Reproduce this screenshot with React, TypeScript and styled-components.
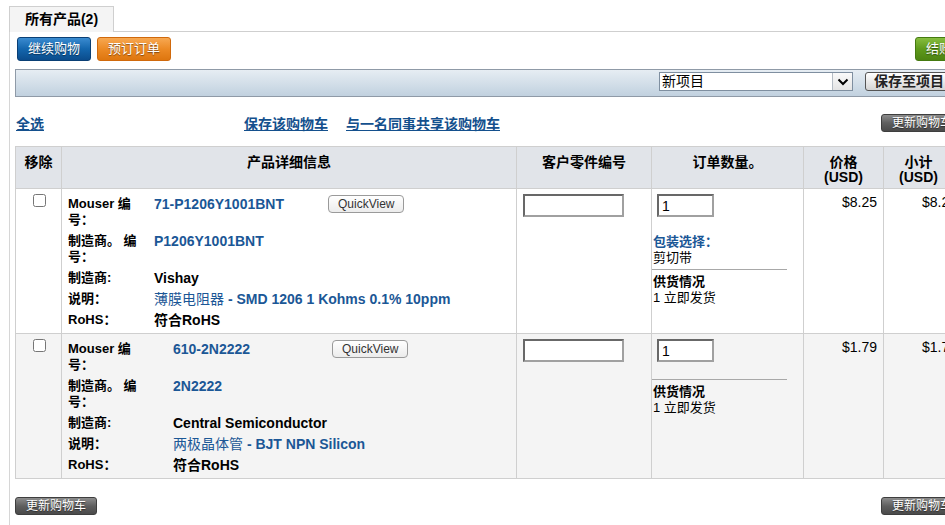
import styled, { createGlobalStyle, css } from "styled-components";

type Product = {
  id: string;
  mouserNo: string;
  mfrNo: string;
  mfr: string;
  descCn: string;
  descEn: string;
  rohs: string;
  price: string;
  subtotal: string;
  packaging?: string;
  labelCol: number;
  valueCol: number;
};

const products: Product[] = [
  {
    id: "p1",
    mouserNo: "71-P1206Y1001BNT",
    mfrNo: "P1206Y1001BNT",
    mfr: "Vishay",
    descCn: "薄膜电阻器",
    descEn: " - SMD 1206 1 Kohms 0.1% 10ppm",
    rohs: "符合RoHS",
    price: "$8.25",
    subtotal: "$8.25",
    packaging: "剪切带",
    labelCol: 86,
    valueCol: 174,
  },
  {
    id: "p2",
    mouserNo: "610-2N2222",
    mfrNo: "2N2222",
    mfr: "Central Semiconductor",
    descCn: "两极晶体管",
    descEn: " - BJT NPN Silicon",
    rohs: "符合RoHS",
    price: "$1.79",
    subtotal: "$1.79",
    labelCol: 105,
    valueCol: 159,
  },
];

const GlobalStyle = createGlobalStyle`
  html, body {
    margin: 0;
    padding: 0;
    overflow: hidden;
    background: #fff;
  }
  body {
    font-family: "Liberation Sans", Arial, "Noto Sans CJK SC", sans-serif;
    font-size: 13px;
    color: #000;
  }
`;

const App = () => {
  return (
    <Page>
      <GlobalStyle />
      <TabStrip>
        <Tab>所有产品(2)</Tab>
        <TabLine />
      </TabStrip>
      <Panel>
        <ButtonRow>
          <ActionButton $tone="blue">继续购物</ActionButton>
          <ActionButton $tone="orange">预订订单</ActionButton>
          <Spacer />
          <ActionButton $tone="green">结账</ActionButton>
        </ButtonRow>

        <ProjectBar>
          <SelectBox>
            <SelectText>新项目</SelectText>
            <SelectArrow>
              <svg width="12" height="8" viewBox="0 0 12 8">
                <polyline points="1.5,1.5 6,6 10.5,1.5" fill="none" stroke="#000" strokeWidth="2" />
              </svg>
            </SelectArrow>
          </SelectBox>
          <SaveButton>保存至项目</SaveButton>
        </ProjectBar>

        <LinkRow>
          <SelectAllCell>
            <TextLink href="#">全选</TextLink>
          </SelectAllCell>
          <TextLink href="#">保存该购物车</TextLink>
          <TextLink href="#">与一名同事共享该购物车</TextLink>
          <Spacer />
          <UpdateButton>更新购物车</UpdateButton>
        </LinkRow>

        <CartTable>
          <colgroup>
            <col style={{ width: 46 }} />
            <col style={{ width: 455 }} />
            <col style={{ width: 135 }} />
            <col style={{ width: 152 }} />
            <col style={{ width: 80 }} />
            <col style={{ width: 80 }} />
          </colgroup>
          <thead>
            <tr>
              <HeadCell>移除</HeadCell>
              <HeadCell>产品详细信息</HeadCell>
              <HeadCell>客户零件编号</HeadCell>
              <HeadCell>订单数量。</HeadCell>
              <HeadCell>
                价格
                <br />
                (USD)
              </HeadCell>
              <HeadCell $shift>
                小计
                <br />
                (USD)
              </HeadCell>
            </tr>
          </thead>
          <tbody>
            {products.map((p, i) => (
              <CartRow key={p.id} product={p} striped={i % 2 === 1} />
            ))}
          </tbody>
        </CartTable>

        <FooterRow>
          <UpdateButton>更新购物车</UpdateButton>
          <Spacer />
          <UpdateButton>更新购物车</UpdateButton>
        </FooterRow>
      </Panel>
    </Page>
  );
};

const CartRow = ({ product, striped }: { product: Product; striped: boolean }) => {
  return (
    <BodyRow $striped={striped}>
      <CheckCell>
        <Check type="checkbox" />
      </CheckCell>
      <Cell>
        <Details $labelCol={product.labelCol} $valueCol={product.valueCol}>
          <Label>Mouser 编号：</Label>
          <Value $link>{product.mouserNo}</Value>
          <QuickView>QuickView</QuickView>

          <Label>制造商。 编号：</Label>
          <Value $link $span>
            {product.mfrNo}
          </Value>

          <Label>制造商:</Label>
          <Value $span>{product.mfr}</Value>

          <Label>说明：</Label>
          <Value $link $span>
            <Plain>{product.descCn}</Plain>
            {product.descEn}
          </Value>

          <Label>RoHS：</Label>
          <Value $span>{product.rohs}</Value>
        </Details>
      </Cell>
      <Cell $pad="5px 0 0 6px">
        <TextInput style={{ width: 101 }} />
      </Cell>
      <Cell $pad="5px 0 0 1px">
        <TextInput style={{ width: 57, marginLeft: 4 }} defaultValue="1" />
        <Stock>
          {product.packaging && (
            <>
              <PackLabel>包装选择：</PackLabel>
              <div>{product.packaging}</div>
            </>
          )}
          <Rule />
          <StockTitle>供货情况</StockTitle>
          <div>1 立即发货</div>
        </Stock>
      </Cell>
      <PriceCell>{product.price}</PriceCell>
      <PriceCell>{product.subtotal}</PriceCell>
    </BodyRow>
  );
};

const Page = styled.div`
  width: 1000px;
  padding: 6px 0 0 9px;
`;

const TabStrip = styled.div`
  display: flex;
  align-items: flex-end;
`;

const Tab = styled.div`
  width: 103px;
  height: 25px;
  border: 1px solid #cfcfcf;
  border-bottom: none;
  background: #f4f4f4;
  font-size: 14px;
  font-weight: bold;
  line-height: 24px;
  text-align: center;
`;

const TabLine = styled.div`
  flex: 1;
  border-bottom: 1px solid #cfcfcf;
`;

const Panel = styled.div`
  border-left: 1px solid #d6d6d6;
  padding: 5px 0 10px 5px;
  width: 948px;
`;

const Spacer = styled.div`
  flex: 1;
`;

const ButtonRow = styled.div`
  display: flex;
  gap: 6px;
  padding-left: 2px;
`;

const tones = {
  blue: css`
    background: linear-gradient(#3a8bd0, #1466ad 50%, #0b4c8c);
    border-color: #0a3f75;
  `,
  orange: css`
    background: linear-gradient(#f7a852, #ec8a25 50%, #de760f);
    border-color: #d0690c;
  `,
  green: css`
    background: linear-gradient(#86bd3f, #5f9a1b 50%, #4d8412);
    border-color: #457a10;
  `,
};

const ActionButton = styled.button<{ $tone: keyof typeof tones }>`
  height: 24px;
  padding: 0 10px;
  border: 1px solid;
  border-radius: 3px;
  color: #fff;
  font-family: inherit;
  font-size: 13px;
  line-height: 22px;
  text-shadow: 0 1px 1px rgba(0, 0, 0, 0.45);
  ${({ $tone }) => tones[$tone]}
`;

const ProjectBar = styled.div`
  display: flex;
  justify-content: flex-end;
  align-items: flex-start;
  gap: 12px;
  margin-top: 8px;
  padding: 2px 10px 0 0;
  box-sizing: border-box;
  height: 28px;
  border: 1px solid #8f9aa7;
  border-right: none;
  background: linear-gradient(#e6edf3, #c1d1df);
`;

const SelectBox = styled.div`
  display: flex;
  width: 194px;
  height: 19px;
  box-sizing: border-box;
  border: 1px solid #7f8fa0;
  background: #fff;
`;

const SelectText = styled.span`
  flex: 1;
  padding-left: 2px;
  font-size: 14px;
  line-height: 17px;
`;

const SelectArrow = styled.span`
  display: flex;
  align-items: center;
  justify-content: center;
  width: 19px;
  border-left: 1px solid #b5bcc4;
  background: linear-gradient(#fafafa, #e4e4e4);
`;

const SaveButton = styled.button`
  height: 19px;
  padding: 0 8px;
  border: 1px solid #555;
  border-radius: 3px;
  background: linear-gradient(#ffffff, #e6e6e6 60%, #d4d4d4);
  font-family: inherit;
  font-size: 14px;
  font-weight: bold;
  line-height: 17px;
  color: #222;
`;

const LinkRow = styled.div`
  display: flex;
  align-items: center;
  gap: 18px;
  margin-top: 17px;
  height: 18px;
`;

const SelectAllCell = styled.div`
  width: 210px;
  padding-left: 1px;
`;

const TextLink = styled.a`
  color: #14508d;
  font-size: 14px;
  font-weight: bold;
  text-decoration: underline;
`;

const UpdateButton = styled.button`
  width: 82px;
  height: 18px;
  padding: 0;
  border: 1px solid #3e3e3e;
  border-radius: 3px;
  background: linear-gradient(#8c8c8c, #5f5f5f 50%, #4a4a4a);
  color: #fff;
  font-family: inherit;
  font-size: 12px;
  line-height: 16px;
  text-shadow: 0 1px 1px rgba(0, 0, 0, 0.5);
`;

const CartTable = styled.table`
  width: 948px;
  margin-top: 14px;
  table-layout: fixed;
  border-collapse: collapse;
  border: 1px solid #cfcfcf;
`;

const HeadCell = styled.th<{ $shift?: boolean }>`
  height: 42px;
  box-sizing: border-box;
  padding: 8px ${({ $shift }) => ($shift ? "10px" : "0")} 0 0;
  border: 1px solid #cfcfcf;
  background: #e1e4e9;
  vertical-align: top;
  font-size: 14px;
  font-weight: bold;
  line-height: 15px;
  text-align: center;
`;

const BodyRow = styled.tr<{ $striped: boolean }>`
  background: ${({ $striped }) => ($striped ? "#f4f4f4" : "#fff")};
`;

const Cell = styled.td<{ $pad?: string }>`
  padding: ${({ $pad }) => $pad ?? "7px 0 5px 6px"};
  border: 1px solid #cfcfcf;
  vertical-align: top;
`;

const CheckCell = styled(Cell)`
  padding: 5px 0 0;
  text-align: center;
`;

const Check = styled.input`
  width: 13px;
  height: 13px;
  margin: 0 0 0 1px;
`;

const Details = styled.div<{ $labelCol: number; $valueCol: number }>`
  display: grid;
  grid-template-columns: ${({ $labelCol, $valueCol }) => `${$labelCol}px ${$valueCol}px auto`};
  row-gap: 5px;
  line-height: 16px;
  justify-items: start;
`;

const Label = styled.span`
  max-width: 80px;
  font-size: 13px;
  font-weight: bold;
`;

const Value = styled.span<{ $link?: boolean; $span?: boolean }>`
  font-size: 14px;
  font-weight: bold;
  color: ${({ $link }) => ($link ? "#1b5796" : "#000")};
  grid-column: ${({ $span }) => ($span ? "2 / 4" : "auto")};
`;

const Plain = styled.span`
  font-weight: normal;
`;

const QuickView = styled.button`
  height: 18px;
  margin-top: -1px;
  padding: 0 9px;
  border: 1px solid #9a9a9a;
  border-radius: 4px;
  background: linear-gradient(#ffffff, #ececec);
  color: #333;
  font-family: inherit;
  font-size: 12px;
  line-height: 16px;
`;

const TextInput = styled.input`
  display: block;
  height: 23px;
  box-sizing: border-box;
  padding: 0 3px;
  border: 2px solid;
  border-color: #686868 #a0a0a0 #a0a0a0 #686868;
  background: #fff;
  font-family: inherit;
  font-size: 14px;
`;

const Stock = styled.div`
  margin-top: 17px;
  line-height: 16px;
`;

const PackLabel = styled.div`
  color: #1b5796;
  font-weight: bold;
`;

const Rule = styled.div`
  width: 135px;
  margin: 3px 0 4px -1px;
  border-top: 1px solid #a8a8a8;
`;

const StockTitle = styled.div`
  font-weight: bold;
`;

const PriceCell = styled.td`
  padding: 5px 6px 0 0;
  border: 1px solid #cfcfcf;
  vertical-align: top;
  text-align: right;
  font-size: 14px;
  line-height: 16px;
`;

const FooterRow = styled.div`
  display: flex;
  margin-top: 18px;
`;

export default App;
